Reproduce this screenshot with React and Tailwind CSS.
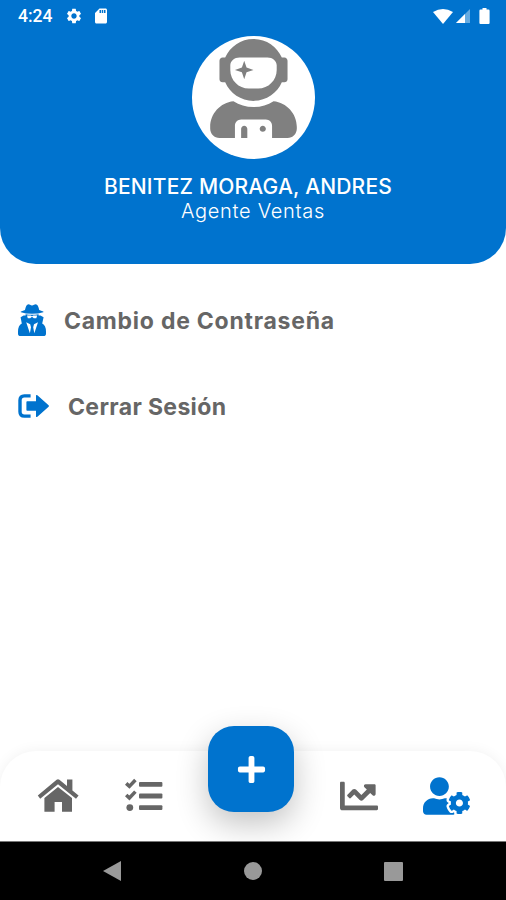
import { FaChartLine, FaPlus, FaUserAstronaut, FaUserCog } from 'react-icons/fa';
import { MdSdCard, MdSettings } from 'react-icons/md';

const SecretAgentIcon = () => (
  <svg className="h-[32px] w-[28px]" viewBox="0 0 28 32" fill="currentColor">
    <path d="M7 6C7.6 2.4 8.8.2 10.4.2 11.6.2 12.6 1.4 14 1.4S16.6.2 17.8.2C19.4.2 20.6 2.4 21.2 6L25.2 7.4Q26 7.8 25.2 8.2Q20.5 9.8 14 9.8T3 8.2Q2.2 7.8 3 7.4Z" />
    <path d="M7.6 10.2Q14 11.4 20.6 10.2V11.6H22.5L25.6 13.2 24.2 19.4Q28 21.6 28 27.4V29.4Q28 32 25.4 32H2.6Q0 32 0 29.4V27.4Q0 21.6 3.8 19.4L2.6 13.2 5.6 11.6H7.6Z" />
    <path d="M9 11.6H12.6L14 12.2 15.4 11.6H19.2L18.3 14.2H15.8L14 12.8 12.2 14.2H9.8Z" fill="#fff" />
    <path d="M8.2 18.2 12.2 20.2 13 23.2 11.9 29.2ZM20 18.2 16 20.2 15.2 23.2 16.3 29.2Z" fill="#fff" />
  </svg>
);

const SignOutIcon = () => (
  <svg className="h-[24px] w-[32px]" viewBox="0 0 32 24" fill="currentColor">
    <path d="M12.6 1.9H6.4Q2 1.9 2 6.3V17.7Q2 22.1 6.4 22.1H12.6" fill="none" stroke="currentColor" strokeWidth="3.4" />
    <path d="M8.4 8Q8.4 7.2 9.2 7.2H18V1.8Q18 .3 19.4 1.3L30.6 11.2Q31.4 12 30.6 12.8L19.4 22.7Q18 23.7 18 22.2V16.8H9.2Q8.4 16.8 8.4 16Z" />
  </svg>
);

const HomeIcon = () => (
  <svg className="h-[34px] w-[42px]" viewBox="0 0 42 34" fill="currentColor">
    <path d="M.8 17.6 19.6 1.8Q21 .7 22.4 1.8L30 8V1.6H35.4V12.4L41.6 17.6 39 20.8 21 6.2 3.2 20.8Z" />
    <path d="M7.4 20 21 9 35 20V33.8H25V24H17.6V33.8H7.4Z" />
  </svg>
);

const TasksIcon = () => (
  <svg className="h-[34px] w-[38px]" viewBox="0 0 38 34" fill="currentColor">
    <rect x="14" y="4" width="23.4" height="4.8" rx="1" />
    <rect x="14" y="15.6" width="23.4" height="4.8" rx="1" />
    <rect x="14" y="27.2" width="23.4" height="4.8" rx="1" />
    <path d="M1.2 5.4 4.4 8.4 10.4 2M1.2 17 4.4 20 10.4 13.6" fill="none" stroke="currentColor" strokeWidth="3.5" />
    <circle cx="4.8" cy="29.6" r="3.4" />
  </svg>
);

const StatusBar = () => (
  <div className="flex h-[32px] items-center justify-between pl-[18px] pr-[16px]">
    <div className="flex items-center">
      <span className="w-[47px] pt-px font-['Roboto',sans-serif] text-[17.5px] font-medium">4:24</span>
      <MdSettings className="size-[18px]" />
      <MdSdCard className="ml-[9px] size-[18px]" />
    </div>
    <div className="flex items-center">
      <svg className="h-[15px] w-[20px]" viewBox="0 0 20 15" fill="currentColor">
        <path d="M0 3Q10 -3 20 3L10 15Z" />
      </svg>
      <svg className="ml-[3px] size-[14px]" viewBox="0 0 14 14" fill="currentColor">
        <path d="M0 14 14 0V14Z" opacity=".4" />
        <path d="M0 14 9 5V14Z" />
      </svg>
      <svg className="ml-[9px] h-[16px] w-[11px]" viewBox="0 0 11 16" fill="currentColor">
        <path d="M3.5 0H7.5V1.6H9.5Q10.6 1.6 10.6 2.7V14.9Q10.6 16 9.5 16H1.5Q.4 16 .4 14.9V2.7Q.4 1.6 1.5 1.6H3.5Z" />
      </svg>
    </div>
  </div>
);

const ProfileHeader = () => (
  <header className="h-[264px] shrink-0 rounded-b-[36px] bg-[#0073ce] text-white">
    <StatusBar />
    <div className="mt-[4px] flex flex-col items-center">
      <div className="flex size-[123px] justify-center rounded-full bg-white pt-[3px]">
        <FaUserAstronaut className="h-[99px] w-[87px] text-[#808080]" />
      </div>
      <h1 className="mt-[15px] whitespace-nowrap pr-[10px] text-[21px] leading-[26px] font-medium tracking-[0.18px]">BENITEZ MORAGA, ANDRES</h1>
      <p className="whitespace-nowrap text-[20px] leading-[22px] font-light tracking-[0.7px]">Agente Ventas</p>
    </div>
  </header>
);

const NavigationBar = () => (
  <div className="flex h-[59px] items-center border-t border-[#777777] bg-black pl-[103px] text-[#999999]">
    <svg className="h-[20px] w-[18px]" viewBox="0 0 18 20" fill="currentColor">
      <path d="M0 10 18 0V20Z" />
    </svg>
    <div className="ml-[123px] size-[18px] rounded-full bg-[#999999]" />
    <div className="ml-[122px] size-[19px] rounded-[1px] bg-[#999999]" />
  </div>
);

const App = () => {
  return (
    <div className="flex h-[900px] w-[506px] flex-col overflow-hidden bg-white font-['Inter',sans-serif]">
      <ProfileHeader />
      <main className="flex-1 pl-[18px] text-[#666666]">
        <button type="button" className="mt-[38px] flex h-[36px] items-center">
          <span className="text-[#0073ce]"><SecretAgentIcon /></span>
          <span className="ml-[18px] whitespace-nowrap pt-[2px] text-[23px] font-bold tracking-[0.75px]">Cambio de Contraseña</span>
        </button>
        <button type="button" className="mt-[50px] flex h-[36px] items-center">
          <span className="text-[#0073ce]"><SignOutIcon /></span>
          <span className="ml-[18px] whitespace-nowrap pt-[2px] text-[23px] font-bold tracking-[0.35px]">Cerrar Sesión</span>
        </button>
      </main>
      <nav className="flex h-[90px] shrink-0 items-start rounded-t-[36px] bg-white pl-[37px] text-[#666666] shadow-[0_0_14px_rgba(0,0,0,0.06)]">
        <div className="mt-[27px]"><HomeIcon /></div>
        <div className="mt-[27px] ml-[46px]"><TasksIcon /></div>
        <button type="button" className="-mt-[25px] ml-[45px] flex size-[86px] items-center justify-center rounded-[26px] bg-[#0073ce] text-white shadow-[0_12px_32px_rgba(0,0,0,0.24)]">
          <FaPlus className="size-[31px]" />
        </button>
        <FaChartLine className="mt-[26px] ml-[46px] size-[38px]" />
        <FaUserCog className="mt-[26px] ml-[45px] h-[38px] w-[47px] text-[#0073ce]" />
      </nav>
      <div className="z-10 shrink-0">
        <NavigationBar />
      </div>
    </div>
  );
};

export default App;
